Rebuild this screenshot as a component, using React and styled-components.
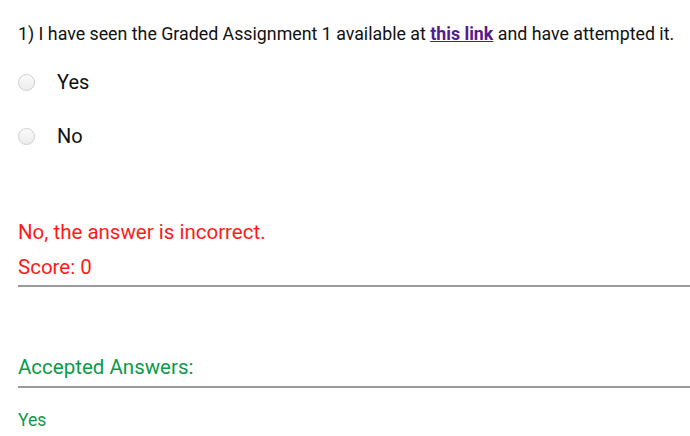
import React from 'react';
import styled, { createGlobalStyle } from 'styled-components';

const GlobalStyle = createGlobalStyle`
    html, body {
        margin: 0;
        padding: 0;
        background: #fff;
    }
    body {
        font-family: Roboto, "Noto Sans", sans-serif;
        color: #111;
    }
`;

const Page = styled.div`
    padding: 20px 0 0 18px;
    width: 690px;
    box-sizing: border-box;
`;

const Question = styled.p`
    margin: 0;
    font-size: 17.8px;
    line-height: 28px;
`;

const Link = styled.a`
    color: #551a8b;
    font-weight: bold;
`;

const Options = styled.div`
    display: flex;
    flex-direction: column;
    gap: 28px;
    margin-top: 21px;
`;

const Option = styled.label`
    display: flex;
    align-items: center;
    gap: 22px;
    font-size: 20px;
    line-height: 26px;
`;

const Radio = styled.span`
    width: 17px;
    height: 17px;
    border-radius: 50%;
    border: 1px solid #cfcfcf;
    background: linear-gradient(#fbfbfb, #ececec);
    box-sizing: border-box;
`;

const Feedback = styled.div`
    margin-top: 71px;
    color: #ff1a1a;
    font-size: 20.5px;
`;

const FeedbackLine = styled.div`
    line-height: 24px;
    margin-bottom: ${p => p.gap || 0}px;
`;

const Rule = styled.div`
    height: 2px;
    background: #9a9a9a;
    margin-top: ${p => p.top}px;
`;

const Accepted = styled.div`
    margin-top: 68px;
    color: #0a9a4a;
`;

const AcceptedTitle = styled.div`
    font-size: 20.5px;
    line-height: 24px;
`;

const AcceptedValue = styled.div`
    font-size: 17.5px;
    margin-top: 22px;
`;

export default function App() {
    return (
        <Page>
            <GlobalStyle />
            <Question>
                1) I have seen the Graded Assignment 1 available at <Link href="#">this link</Link> and have attempted it.
            </Question>
            <Options>
                <Option><Radio />Yes</Option>
                <Option><Radio />No</Option>
            </Options>
            <Feedback>
                <FeedbackLine gap={11}>No, the answer is incorrect.</FeedbackLine>
                <FeedbackLine>Score: 0</FeedbackLine>
                <Rule top={6} />
            </Feedback>
            <Accepted>
                <AcceptedTitle>Accepted Answers:</AcceptedTitle>
                <Rule top={7} />
                <AcceptedValue>Yes</AcceptedValue>
            </Accepted>
        </Page>
    );
}
